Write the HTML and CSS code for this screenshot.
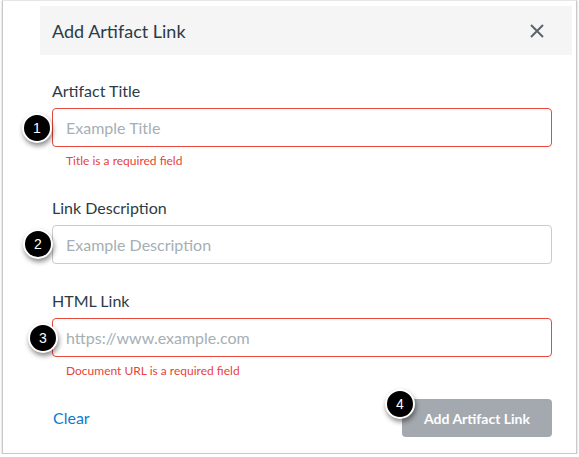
FILE: index.html
```html
<!DOCTYPE html>
<html>
<head>
<meta charset="utf-8">
<title>Add Artifact Link</title>
<link rel="stylesheet" href="styles.css">
</head>
<body>
<div class="frame">
  <div class="header">
    <h1 class="title">Add Artifact Link</h1>
    <button class="close" aria-label="Close">
      <svg width="14" height="14" viewBox="0 0 14 14"><path d="M1 1 L13 13 M13 1 L1 13" stroke="#5b636b" stroke-width="2" fill="none"/></svg>
    </button>
  </div>
  <div class="content">
    <div class="field f1">
      <label class="label">Artifact Title</label>
      <div class="input-wrap">
        <div class="input error">Example Title</div>
        <span class="badge b1">1</span>
      </div>
      <div class="err">Title is a required field</div>
    </div>
    <div class="field f2">
      <label class="label">Link Description</label>
      <div class="input-wrap">
        <div class="input">Example Description</div>
        <span class="badge b2">2</span>
      </div>
    </div>
    <div class="field f3">
      <label class="label">HTML Link</label>
      <div class="input-wrap">
        <div class="input error">https://www.example.com</div>
        <span class="badge b3">3</span>
      </div>
      <div class="err">Document URL is a required field</div>
    </div>
    <div class="footer">
      <a class="clear">Clear</a>
      <div class="btn-wrap">
        <button class="submit">Add Artifact Link</button>
        <span class="badge b4">4</span>
      </div>
    </div>
  </div>
</div>
</body>
</html>
```
FILE: styles.css
```css
* { box-sizing: border-box; }
html, body { margin: 0; padding: 0; background: #ffffff; }
body { font-family: Lato, "Noto Sans", sans-serif; color: #2d3b45; }

.frame {
  margin-left: 2px;
  width: 575px;
  height: 454px;
  border: 1px solid #c9c9c9;
  border-top-color: #e6e6e6;
  box-shadow: 0 1px 2px rgba(0,0,0,0.25);
  background: #fff;
}

.header {
  margin: 5px 4px 0 37px;
  height: 49px;
  background: #f5f5f5;
  display: flex;
  align-items: center;
  justify-content: space-between;
  padding: 0 28px 0 12px;
}
.title {
  margin: 0;
  font-size: 18px;
  font-weight: 400;
  line-height: 22px;
  color: #2d3b45;
}
.close {
  border: 0;
  background: none;
  padding: 0;
  width: 14px;
  height: 14px;
  display: flex;
}

.content {
  padding: 26px 24px 0 49px;
}
.field { width: 500px; }
.f1 { margin-bottom: 29px; }
.f2 { margin-bottom: 27px; }

.label {
  display: block;
  font-size: 16px;
  line-height: 20px;
  color: #2d3b45;
  margin-bottom: 7px;
}
.input-wrap { position: relative; }
.input {
  height: 39px;
  border: 1px solid #c7cdd1;
  border-radius: 4px;
  padding: 0 13px;
  display: flex;
  align-items: center;
  font-size: 16px;
  color: #a5afb5;
}
.input.error { border-color: #e8493a; }
.err {
  margin-top: 6px;
  padding-left: 14px;
  font-size: 12px;
  line-height: 16px;
  color: #e8433a;
}

.footer {
  margin-top: 20px;
  width: 500px;
  display: flex;
  align-items: center;
  justify-content: space-between;
}
.clear {
  font-size: 16px;
  line-height: 20px;
  color: #0b7bd0;
  padding-left: 1px;
}
.btn-wrap { position: relative; }
.submit {
  width: 150px;
  height: 38px;
  border: 0;
  border-radius: 4px;
  background: #a4a9b0;
  color: #ffffff;
  font-family: Lato, "Noto Sans", sans-serif;
  font-size: 14px;
  font-weight: 700;
  padding: 0;
}

.badge {
  position: absolute;
  width: 30px;
  height: 30px;
  border-radius: 50%;
  background: #000;
  border: 2px solid #fff;
  box-shadow: 1px 3px 5px rgba(0,0,0,0.45);
  color: #fff;
  font-size: 14px;
  line-height: 26px;
  text-align: center;
  font-family: "Liberation Sans", Arial, sans-serif;
}
.b1 { left: -30px; top: 5px; }
.b2 { left: -29px; top: 4px; }
.b3 { left: -24px; top: 5px; }
.b4 { left: -17px; top: -10px; }
```
